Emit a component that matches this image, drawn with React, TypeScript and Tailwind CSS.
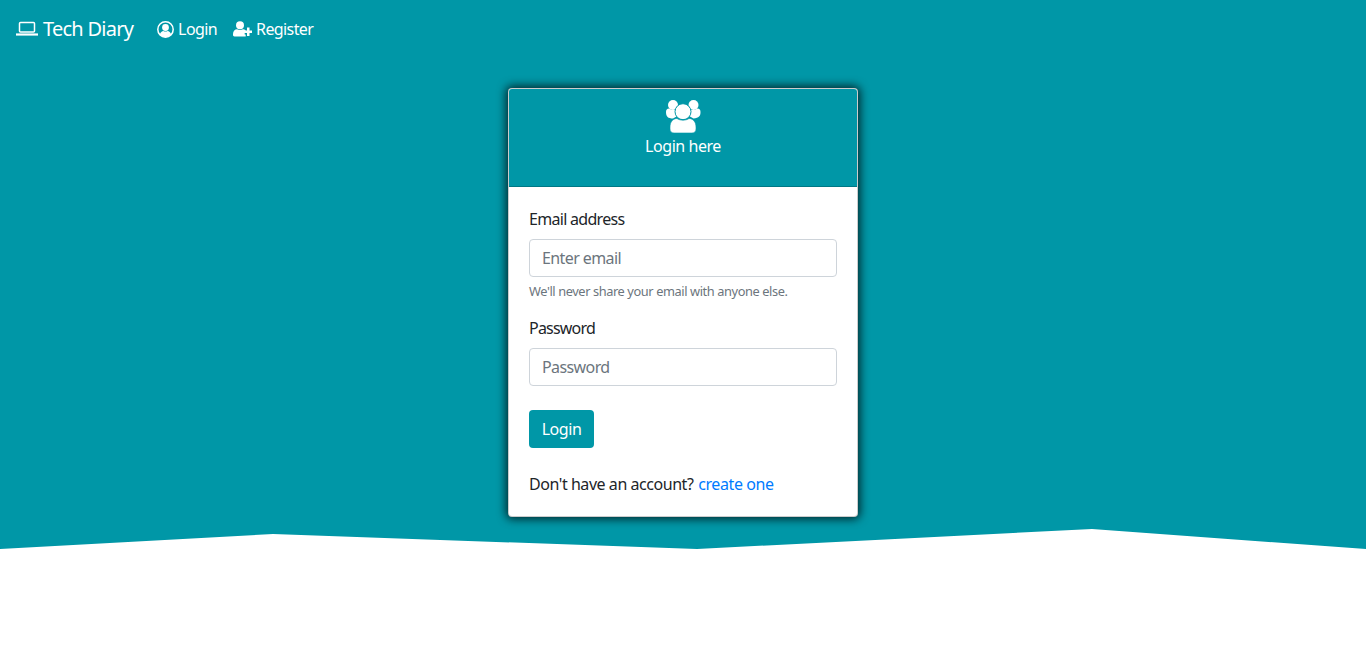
function Laptop() {
  return (
    <svg width="22" height="16" viewBox="0 0 22 16" className="mr-[5px] shrink-0" fill="none" stroke="white">
      <rect x="3.500" y="1.500" width="15" height="9.500" rx="1" strokeWidth="1.500" />
      <path d="M0 13.500h22" strokeWidth="2.200" />
    </svg>
  );
}

function UserCircle() {
  return (
    <svg width="17" height="17" viewBox="0 0 17 17" className="mr-[4px] shrink-0">
      <circle cx="8.500" cy="8.500" r="7.700" fill="none" stroke="white" strokeWidth="1.500" />
      <circle cx="8.500" cy="6.500" r="3.400" fill="white" />
      <path d="M2.800 13.500c.6-2.300 2.300-3.500 3.500-3.500.8.400 1.400.6 2.200.6s1.400-.2 2.200-.6c1.200 0 2.900 1.200 3.500 3.500-1.500 1.700-3.500 2.700-5.700 2.700s-4.200-1-5.700-2.700z" fill="white" />
    </svg>
  );
}

function UserPlus() {
  return (
    <svg width="19" height="16" viewBox="0 0 19 16" className="mr-[4px] shrink-0" fill="white">
      <circle cx="7" cy="4.200" r="4" />
      <path d="M0 13c0-3 2-4.700 4-4.700 1 .5 2 .8 3 .8s2-.3 3-.8c1 0 2 .4 2.700 1.200v2.500h-1v1.600h1V15.500H1.500C.5 15.500 0 14.800 0 13.800z" />
      <path d="M14 6.500h2.500v3h2.500v2.500h-2.500v3H14v-3h-2.500v-2.500H14z" />
    </svg>
  );
}

function Users() {
  return (
    <svg width="37" height="35" viewBox="0 0 37 35" fill="white">
      <circle cx="8" cy="6" r="5" />
      <circle cx="28.500" cy="6" r="5" />
      <path d="M1 13c0-2 1-3.500 3-3.500 1.500 1.300 6 2 8 1l3 5-7 4C3 19.500 1 17.500 1 13z" />
      <path d="M35.500 13c0-2-1-3.500-3-3.500-1.500 1.300-6 2-8 1l-3 5 7 4c5.500-.5 7-2.500 7-6.500z" />
      <circle cx="18" cy="12.700" r="8" stroke="#0097a7" strokeWidth="1" />
      <path d="M5 28c0-5 3-8.500 7-8.500 1.500 1 3.500 1.700 6 1.700s4.500-.7 6-1.700c4 0 7 3.500 7 8.500v2c0 2.500-1.500 4-4 4H9c-2.500 0-4-1.500-4-4z" stroke="#0097a7" strokeWidth="0.600" />
    </svg>
  );
}

export default function App() {
  return (
    <div className="min-h-[657px] bg-white font-['Noto_Sans','Open_Sans',sans-serif] text-[16px] leading-6 text-[#212529]">
      <div className="h-[549px] bg-[#0097a7] [clip-path:polygon(0_0,100%_0,100%_100%,1092px_529px,697px_100%,273px_534px,0_100%)]">
        <nav className="flex h-[58px] items-center px-4 text-white">
          <a className="mr-[24px] flex items-center text-[20px] tracking-[-0.75px]">
            <Laptop />
            Tech Diary
          </a>
          <a className="mr-4 flex items-center tracking-[-0.6px]">
            <UserCircle />
            Login
          </a>
          <a className="flex items-center tracking-[-0.6px]">
            <UserPlus />
            Register
          </a>
        </nav>
        <div className="mx-auto mt-[30px] w-[350px] rounded border border-black/20 bg-white shadow-[0_0_10px_2px_rgba(0,0,0,0.75)]">
          <div className="flex h-[98px] flex-col items-center rounded-t-[3px] border-b border-black/20 bg-[#0097a7] pt-[10px] text-white">
            <Users />
            <div className="tracking-[-0.45px]">Login here</div>
          </div>
          <div className="p-5">
            <label className="mb-2 block tracking-[-0.7px]">Email address</label>
            <div className="flex h-[38px] items-center rounded border border-[#ced4da] px-3 tracking-[-0.6px] text-[#6c757d]">Enter email</div>
            <div className="mt-[5px] mb-[15px] text-[12.8px] leading-[19.2px] tracking-[-0.4px] text-[#6c757d]">We'll never share your email with anyone else.</div>
            <label className="mb-2 block tracking-[-0.8px]">Password</label>
            <div className="flex h-[38px] items-center rounded border border-[#ced4da] px-3 tracking-[-0.6px] text-[#6c757d]">Password</div>
            <button className="mt-6 block h-[38px] w-[65px] rounded bg-[#0097a7] tracking-[-0.45px] text-white">Login</button>
            <p className="mt-6 tracking-[-0.45px]">
              Don't have an account? <a className="ml-[1px] tracking-[-0.4px] text-[#007bff]">create one</a>
            </p>
          </div>
        </div>
      </div>
    </div>
  );
}
